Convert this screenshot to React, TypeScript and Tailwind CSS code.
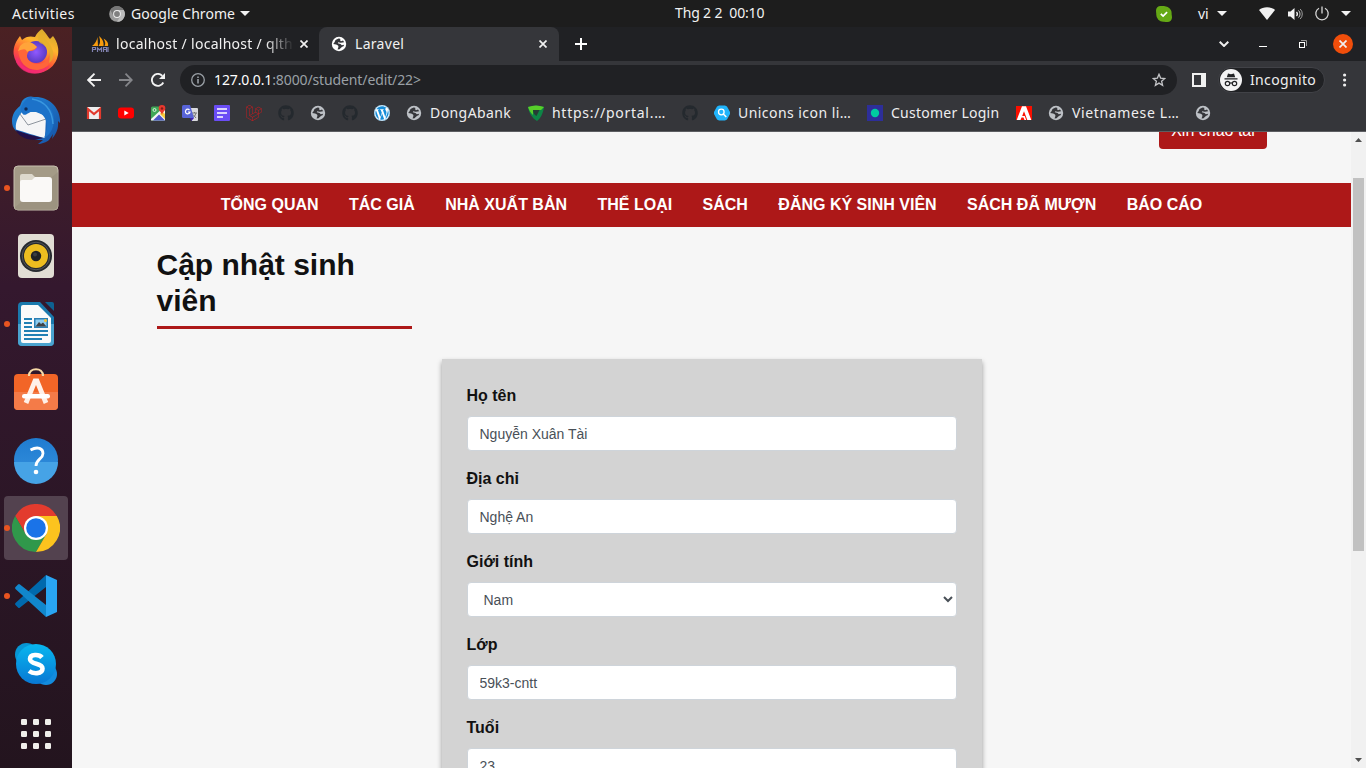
import React from "react";
import { FaGithub, FaLaravel, FaWordpress } from "react-icons/fa";

type IconProps = { className?: string };

const ui = "font-['Noto_Sans','Open_Sans',sans-serif]";

function Globe({ className = "" }: IconProps) {
  return (
    <svg viewBox="0 0 16 16" className={"size-4 shrink-0 " + className}>
      <circle cx="8" cy="8" r="7.2" fill="currentColor" />
      <path d="M7.600 2.600C6.200 3.300 4.600 3.500 4 5C3.900 6.300 3 6.800 2.200 8L5.200 8.600L7 9.500C8 10.600 7 11.600 6.600 13.600L8.600 13.200C10 12 10.500 11 12.500 10.300L13.200 8.800L10.800 9.200L9.500 8L6.800 7.300L7.200 6.200L9.500 6.800C11 7 12 6.200 13.200 6.300L12 4.400L10 5.200C8.800 5 9.500 3.800 9.200 2.800Z" fill="#35363a" />
    </svg>
  );
}

function Caret({ className = "" }: IconProps) {
  return (
    <svg viewBox="0 0 10 5" className={"h-[5px] w-[10px] " + className}>
      <path d="M0 0H10L5 5Z" fill="#f2f2f2" />
    </svg>
  );
}

function Cross({ className = "" }: IconProps) {
  return (
    <svg viewBox="0 0 8 8" className={"size-2 " + className}>
      <path d="M.5.5 7.5 7.5M7.5.5.5 7.5" stroke="#f1f1f1" strokeWidth="1.7" fill="none" />
    </svg>
  );
}

function TopBar() {
  return (
    <header className={ui + " flex h-[27px] shrink-0 items-center bg-[#1d1d1d] text-[14px] leading-[25px] text-[#f2f2f2]"}>
      <span className="ml-3 w-[97px] pb-px tracking-[0.45px]">Activities</span>
      <svg viewBox="0 0 16 16" className="size-4 shrink-0">
        <circle cx="8" cy="8" r="7.8" fill="#9b9b9b" />
        <path d="M8 4H14.8A7.8 7.8 0 0 0 1.3 4L4.6 10Z" fill="#777" />
        <path d="M8 4H14.8A7.8 7.8 0 0 1 8 15.8L11.5 10Z" fill="#bbb" />
        <circle cx="8" cy="8" r="3.9" fill="#eee" />
        <circle cx="8" cy="8" r="2.9" fill="#808080" />
      </svg>
      <span className="ml-[6px] w-[109px] pb-px tracking-[0.05px] whitespace-nowrap">Google Chrome</span>
      <Caret />
      <span className="ml-[425px] w-[481px] pb-[2px] tracking-[-0.15px] whitespace-pre">Thg 2 2  00:10</span>
      <svg viewBox="0 0 16 16" className="size-4 shrink-0">
        <path d="M4.500 0C7 0 7-.1 9 .2A7 7 0 0 1 15.600 8C15.700 9 16 10 16 11.500A4.500 4.500 0 0 1 11.500 16C10 16 9 15.800 8 15.700A7 7 0 0 1 .3 8C.2 7 0 6 0 4.500A4.500 4.500 0 0 1 4.500 0Z" fill="#65a915" />
        <path d="m4.800 7.800 2.300 2.200 4-3.900" stroke="#fff" strokeWidth="1.7" fill="none" />
      </svg>
      <span className="ml-[26px] w-[19px] pb-px">vi</span>
      <Caret />
      <svg viewBox="0 0 16 13" className="ml-[32px] h-[13px] w-4 shrink-0">
        <path d="M0 3C4-.7 12-.7 16 3L8 13Z" fill="#f2f2f2" />
      </svg>
      <svg viewBox="0 0 16 16" className="ml-3 size-4 shrink-0" fill="none" stroke="#f2f2f2">
        <path d="M1 5.500H3.500L7.500 2V14L3.500 10.500H1Z" fill="#f2f2f2" stroke="none" />
        <path d="M9.500 6A3 3 0 0 1 9.500 10" strokeWidth="1.3" />
        <path d="M11.500 4.400A5 5 0 0 1 11.500 11.600" opacity=".8" />
        <path d="M13.200 3A7 7 0 0 1 13.200 13" opacity=".6" />
      </svg>
      <svg viewBox="0 0 16 16" className="ml-[11px] size-4 shrink-0" fill="none" stroke="#d8d8d8" strokeWidth="1.3">
        <path d="M5 2.200A6.200 6.200 0 1 0 11 2.200M8 .5V7.500" />
      </svg>
      <Caret className="ml-[11px]" />
    </header>
  );
}

function Firefox() {
  return (
    <svg viewBox="0 0 48 48" className="size-12">
      <defs>
        <linearGradient id="ff1" x1=".8" y1="0" x2=".3" y2="1"><stop stopColor="#cda72c" /><stop offset=".35" stopColor="#ffb52e" /><stop offset=".65" stopColor="#ff5a35" /><stop offset="1" stopColor="#e5157c" /></linearGradient>
        <radialGradient id="ff2"><stop stopColor="#9059ff" /><stop offset="1" stopColor="#5b3bc4" /></radialGradient>
      </defs>
      <path d="M30 1C34 5 36 9 38 11L41 8C46 15 47 21 46 27A22.5 22.5 0 0 1 1.600 26C1 19 4 13 8 8L10 12C14 8 19 8 23 9C25 5 27 3 30 1Z" fill="url(#ff1)" />
      <path d="M5 29C9 42 25 47 38 37C31 50 10 48 4 34Z" fill="#f72d73" opacity=".7" />
      <circle cx="24" cy="24" r="11" fill="url(#ff2)" />
      <path d="M6 22C11 21 10 16 15 14L25 19C23 23 20 23 17 23C12 29 17 35 25 36C33 36 38 31 37 23C42 34 35 41 25 42C13 42 7 33 6 22Z" fill="#ff663a" />
      <path d="M8 18C13 13 19 12 25 19C21 23 17 22 15 24C14 20 11 21 6 23Z" fill="#ffa43a" />
      <path d="M29 5C32 12 38 13 41 23C42 30 40 33 37 35C39 26 36 18 28 15C25 12 26 8 29 5Z" fill="#e4af2c" opacity=".8" />
    </svg>
  );
}

function Thunderbird() {
  return (
    <svg viewBox="0 0 48 48" className="size-12">
      <defs><linearGradient id="tb" x1="0" y1="0" x2="1" y2="1"><stop stopColor="#248bdc" /><stop offset="1" stopColor="#1552a6" /></linearGradient></defs>
      <path d="M10 5C14 0 19 0 22 1C37 0 49 12 48 27L46 25C47 34 43 39 40 43L41 38L37 44C35 46 29 48 26 48L31 44L25 44L4 35C1 32 0 29 0 25C0 18 4 13 8 10Z" fill="url(#tb)" />
      <path d="M10 16 24 16 34 20 33 42C24 40 12 36 4 33.500C3 28 5 22 10 16Z" fill="#f5f5f6" />
      <path d="M8 18 16 29 34 23" fill="none" stroke="#8d949d" />
      <path d="M3.500 34C12 37 22 40 31 42C29 43 27 42.500 25 43.500C14 45 7 40 3.500 34Z" fill="#21104a" />
      <path d="M10 17C6 13 11 6 17 1C27 0 42 10 42 23C42 33 37 40 32 42C38 28 34 17 22 15C17 15 13 22 10 17Z" fill="#1c72c9" />
      <path d="M20 3C32 5 40 13 41 28" fill="none" stroke="#46a7e8" strokeWidth="1.500" opacity=".7" />
      <circle cx="14" cy="13" r="1.700" fill="#102a55" />
    </svg>
  );
}

function Files() {
  return (
    <svg viewBox="0 0 48 48" className="size-12">
      <rect x="2" y="2" width="44" height="44" rx="4" fill="#a49b87" stroke="#c6bfae" />
      <path d="M2 44 46 8V42Q46 46 42 46H4Z" fill="#978e7b" opacity=".6" />
      <path d="M8 12Q8 10 10 10H20L23 13H36V20H8Z" fill="#ddd9cd" />
      <path d="M8 18Q8 16 10 16H20L23 13H37Q40 13 40 16V35Q40 38 37 38H11Q8 38 8 35Z" fill="#faf9f7" />
    </svg>
  );
}

function Rhythmbox() {
  return (
    <svg viewBox="0 0 48 48" className="size-12">
      <rect x="6" y="2" width="36" height="44" rx="4" fill="#e1ddd4" />
      <circle cx="24" cy="24" r="16" fill="#26292e" />
      <circle cx="24" cy="24" r="13.800" fill="none" stroke="#55585c" />
      <circle cx="24" cy="24" r="12" fill="#edbd20" />
      <circle cx="24" cy="24" r="5.200" fill="#202225" />
      <circle cx="23" cy="22.500" r="2" fill="#3b3e42" />
    </svg>
  );
}

function Writer() {
  return (
    <svg viewBox="0 0 48 48" className="size-12">
      <path d="M10 2H28L42 17V42Q42 46 38 46H10Q6 46 6 42V6Q6 2 10 2Z" fill="#1a79ad" />
      <path d="M6 24H42V42Q42 46 38 46H10Q6 46 6 42Z" fill="#4aa3cf" />
      <path d="M33 2H40Q42 2 42 4V11Z" fill="#0e6191" />
      <path d="M11 5H26L39 18V41Q39 43 37 43H11Q9 43 9 41V7Q9 5 11 5Z" fill="#fafafa" />
      <path d="M12 19H20M12 23H20M12 27H20M12 31H36M12 35H36M12 39H30" stroke="#2180b4" strokeWidth="1.800" />
      <rect x="22" y="18" width="14" height="10" fill="#2a7fb4" />
      <rect x="23.500" y="19.500" width="11" height="7" fill="#8dccef" />
      <path d="M23.500 26.500 27 22 29 24 31 22.500 34.500 26.500Z" fill="#3e4245" /><circle cx="33.500" cy="20.500" r="1.500" fill="#f5c12e" />
    </svg>
  );
}

function Software() {
  return (
    <svg viewBox="0 0 48 48" className="size-12">
      <rect x="2" y="6" width="44" height="36" rx="4" fill="#f26527" />
      <path d="M2 24H46V38Q46 42 42 42H6Q2 42 2 38Z" fill="#f47b48" />
      <path d="M17 8C17-1 31-1 31 8" fill="none" stroke="#f6d9a6" strokeWidth="2.200" />
      <path d="M14 35 23 13H25L34 35" fill="none" stroke="#fff0e8" strokeWidth="4.800" />
      <rect x="10" y="26" width="28" height="4.500" rx="2.200" fill="#fff" />
    </svg>
  );
}

function Help() {
  return (
    <svg viewBox="0 0 48 48" className="size-12">
      <defs><linearGradient id="hp" x1="0" y1="0" x2="0" y2="1"><stop stopColor="#1f7bd0" /><stop offset="1" stopColor="#3592de" /></linearGradient></defs>
      <circle cx="24" cy="24" r="22" fill="url(#hp)" />
      <path d="M2 26A22 22 0 0 0 46 26Z" fill="#46a3e6" />
      <path d="M18.500 14C26 10 31 12.500 31 17.500C31 23 24 23 24 30" fill="none" stroke="#fff" strokeWidth="2.800" />
      <circle cx="24" cy="36" r="2.300" fill="#fff" />
    </svg>
  );
}

function Chrome() {
  return (
    <svg viewBox="0 0 48 48" className="size-12">
      <path d="M24 12H44.800A24 24 0 0 0 3.200 12L13.600 30Z" fill="#e33b2e" />
      <path d="M13.600 30 3.200 12A24 24 0 0 0 24 48L34.400 30Z" fill="#30984b" />
      <path d="M34.400 30 24 48A24 24 0 0 0 44.800 12H24Z" fill="#fcc31e" />
      <circle cx="24" cy="24" r="12" fill="#fff" /><circle cx="24" cy="24" r="9.800" fill="#1a73e8" />
    </svg>
  );
}

function Code() {
  return (
    <svg viewBox="0 0 48 48" className="size-12">
      <path d="M34 3V15L8 35.500Q7 36.500 6 35.500L3.500 33Q2.500 32 3.500 31Z" fill="#0069ad" />
      <path d="M34 45V33L8 12.500Q7 11.500 6 12.500L3.500 15Q2.500 16 3.500 17Z" fill="#1187cc" />
      <path d="M34 3 45 8V40L34 45Z" fill="#29a5f2" />
    </svg>
  );
}

function Skype() {
  return (
    <svg viewBox="0 0 48 48" className="size-12">
      <defs><linearGradient id="sk" x1="0" y1="0" x2="0" y2="1"><stop stopColor="#08b7ef" /><stop offset="1" stopColor="#0878d4" /></linearGradient></defs>
      <circle cx="14.500" cy="14.500" r="11.500" fill="#0796d4" /><circle cx="34" cy="34" r="11" fill="#138bdd" />
      <circle cx="24" cy="24" r="20" fill="url(#sk)" />
      <path d="M30 17.500C27 14 18 14 18 19C18 25 30.500 22.500 30.500 28.500C30.500 34.500 21 34 17 31" fill="none" stroke="#fff" strokeWidth="4.600" />
    </svg>
  );
}

function AppGrid() {
  return (
    <svg viewBox="0 0 30 30" className="mt-1 size-[30px]" fill="#f0efeb">
      {[0, 12, 24].map((y) => [0, 12, 24].map((x) => <rect key={x + "-" + y} x={x} y={y} width="6" height="6" rx="1.2" />))}
    </svg>
  );
}

const apps = [
  { Icon: Firefox }, { Icon: Thunderbird }, { Icon: Files, running: true }, { Icon: Rhythmbox },
  { Icon: Writer, running: true }, { Icon: Software }, { Icon: Help },
  { Icon: Chrome, running: true, active: true }, { Icon: Code, running: true }, { Icon: Skype }, { Icon: AppGrid },
];

function Dock() {
  return (
    <aside className="w-[72px] shrink-0 overflow-hidden bg-linear-to-b from-[#4b2123] via-[#34182e] via-35% to-[#23141e]">
      <div className="-mt-[9px] flex flex-col">
        {apps.map(({ Icon, running, active }, i) => (
          <div key={i} className="flex h-[68px] shrink-0 items-center justify-center">
            <div className={"relative flex size-16 items-center justify-center rounded " + (active ? "bg-[#53424f]" : "")}>
              {running && <i className="absolute top-[29px] left-0 size-[6px] rounded-full bg-[#e95420]" />}
              <Icon />
            </div>
          </div>
        ))}
      </div>
    </aside>
  );
}

function TabStrip() {
  return (
    <div className="flex h-[34px] items-center bg-[#202124] text-[14px] leading-5 text-[#f1f1f1]">
      <svg viewBox="0 0 18 16" className="ml-[19px] h-4 w-[18px] shrink-0">
        <path d="M1 10C4 8 6 4 6.500 1L7 10ZM7.500 10C10 7 9 3 8 0C12 3 13 7 12.500 10ZM13.500 10C15 8 14 5 12.500 2.500C17 5 17.500 8 17 10Z" fill="#f89c0e" />
        <path d="M1.500 16V11.500H4.500V13.500H2M6.500 16V12L8.500 14 10.500 12V16M12.500 16V11.500H15.500V16M12.500 13.500H15.500M17 11V16" fill="none" stroke="#8182b1" strokeWidth="1.200" />
      </svg>
      <span className="ml-[7px] w-[178px] overflow-hidden tracking-[0.28px] whitespace-nowrap [mask-image:linear-gradient(90deg,#000_84%,transparent)]">localhost / localhost / qlth</span>
      <Cross className="ml-[6px]" />
      <div className="ml-[11px] flex h-full w-[240px] items-center rounded-t-lg bg-[#35363a] pl-3">
        <Globe className="text-white" />
        <span className="ml-2 w-[184px] tracking-[0.3px]">Laravel</span>
        <Cross />
      </div>
      <svg viewBox="0 0 12 12" className="ml-4 size-3"><path d="M6 0V12M0 6H12" stroke="#fff" strokeWidth="2" /></svg>
      <svg viewBox="0 0 10 6" className="ml-[632px] h-[6px] w-[10px]"><path d="m.7.7 4.300 4.300L9.300.7" fill="none" stroke="#eee" strokeWidth="2" /></svg>
      <i className="mt-[5px] ml-[30px] h-px w-2 bg-white" />
      <svg viewBox="0 0 8 8" className="ml-8 size-2" fill="none"><path d="M2 .5H7.500V6" stroke="#999" /><rect x=".5" y="2.500" width="5" height="5" stroke="#fff" /></svg>
      <span className="ml-[26px] flex size-5 items-center justify-center rounded-full bg-[#f04e0b]"><Cross /></span>
    </div>
  );
}

function Toolbar() {
  return (
    <div className="flex h-[37px] items-center bg-[#35363a] text-[14px]">
      <svg viewBox="0 0 14 14" className="ml-[15px] size-[14px]" fill="none" stroke="#f1f1f1" strokeWidth="1.900"><path d="M14 7H1.500M7.500.7 1.200 7l6.300 6.300" /></svg>
      <svg viewBox="0 0 14 14" className="ml-[18px] size-[14px]" fill="none" stroke="#85868a" strokeWidth="1.800"><path d="M0 7H12.500M6.500.7 12.800 7l-6.300 6.300" /></svg>
      <svg viewBox="0 0 14 14" className="ml-[18px] size-[14px]" fill="none" stroke="#f1f1f1" strokeWidth="1.900"><path d="M12.300 9.500A6 6 0 1 1 11.300 2.800" /><path d="M14 0V6H8Z" fill="#f1f1f1" stroke="none" /></svg>
      <div className="ml-[15px] flex h-[30px] w-[997px] items-center rounded-full bg-[#202124]">
        <svg viewBox="0 0 14 14" className="ml-[11px] size-[14px]" fill="none" stroke="#9aa0a6"><circle cx="7" cy="7" r="6.300" strokeWidth="1.300" /><path d="M7 6V10.500M7 3.500V5" strokeWidth="1.600" /></svg>
        <span className="ml-[9px] flex-1 tracking-[-0.12px] text-[#9aa0a6]"><span className="text-white">127.0.0.1</span>:8000/student/edit/22&gt;</span>
        <svg viewBox="0 0 14 14" className="mr-[11px] size-[14px]" fill="none" stroke="#c4c5c8" strokeWidth="1.300"><path d="m7 1.300 1.600 3.800 4.200.4-3.200 2.700 1 4.100L7 10.100l-3.600 2.200 1-4.100L1.200 5.500l4.200-.4Z" /></svg>
      </div>
      <svg viewBox="0 0 14 14" className="ml-[15px] size-[14px]"><path d="M0 0H14V14H0ZM2 2V12H9V2Z" fill="#f1f1f1" fillRule="evenodd" /></svg>
      <div className="ml-3 flex h-[26px] w-[107px] items-center rounded-full border border-[#414247] bg-[#202124] pl-px text-[#eee]">
        <svg viewBox="0 0 22 22" className="size-[22px] shrink-0">
          <circle cx="11" cy="11" r="11" fill="#f3f3f4" />
          <path d="M8 4.500 11 5.200 14 4.500 15.200 8.300H6.800ZM4.500 9.300H17.500V10.400H4.500Z" fill="#222326" />
          <g fill="none" stroke="#222326" strokeWidth="1.200"><circle cx="7.500" cy="14.500" r="2.200" /><circle cx="14.500" cy="14.500" r="2.200" /><path d="M9.700 14.300Q11 13.500 12.300 14.300" /></g>
        </svg>
        <span className="ml-2 tracking-[0.35px]">Incognito</span>
      </div>
      <svg viewBox="0 0 4 14" className="ml-[18px] h-[14px] w-1" fill="#eee"><circle cx="1.600" cy="2" r="1.600" /><circle cx="1.600" cy="7" r="1.600" /><circle cx="1.600" cy="12" r="1.600" /></svg>
    </div>
  );
}

const box = "size-4 shrink-0";

const Gmail = () => <svg viewBox="0 0 16 16" className={box}><path d="M1 2H15V14H1Z" fill="#eee" /><path d="M2 14V4L8 9 14 4V14" fill="none" stroke="#e13a2d" strokeWidth="2.200" /></svg>;
const YouTube = () => <svg viewBox="0 0 16 16" className={box}><rect y="2.500" width="16" height="11" rx="3" fill="#f00" /><path d="M6.300 5.500 10.700 8l-4.400 2.500Z" fill="#fff" /></svg>;
const Maps = () => <svg viewBox="0 0 16 16" className={box}><rect x="1" y="1.500" width="14" height="14" rx="1.500" fill="#3fa757" /><path d="M1 14 13 3 15 5V15.500H1Z" fill="#f4f4f4" /><path d="M3 15.500 9 9.500 15 15.500Z" fill="#4c55c9" /><path d="M10 9 15 14V9L12 6Z" fill="#f6cb3c" /><circle cx="4.500" cy="5" r="1.500" fill="none" stroke="#d9f0dd" /><path d="M12 0A3.300 3.300 0 0 1 15.300 3.500C15.300 6 12.500 7 12 10C11.500 7 8.700 6 8.700 3.500A3.300 3.300 0 0 1 12 0Z" fill="#e8382d" /><circle cx="12" cy="3.500" r="1.200" fill="#831d18" /></svg>;
const Translate = () => <svg viewBox="0 0 16 16" className={box}><path d="M7 3H15Q16 3 16 4V15Q16 16 15 16H10Z" fill="#d8d9dd" /><path d="M10 8H15M12.500 7V8M14 8Q13 12 10.500 13M11 9.500 14 13" stroke="#777" fill="none" /><path d="M1.500 0H8L12 13H1.500Q0 13 0 11.500V1.500Q0 0 1.500 0Z" fill="#5864d8" /><path d="M7.500 5A2.300 2.300 0 1 0 8 7H6" stroke="#fff" strokeWidth="1.200" fill="none" /><path d="M8 13H12L9.500 16Z" fill="#4020b4" /></svg>;
const Forms = () => <svg viewBox="0 0 16 16" className={box}><rect width="16" height="16" rx="1" fill="#6a4df5" /><path d="M3 4H13M3 8H13M3 12H9" stroke="#fff" strokeWidth="1.700" /></svg>;
const Shield = () => <svg viewBox="0 0 16 16" className={box}><path d="M0 2Q8-1 16 2C15 9 12 14 9 16C4 13 1 8 0 2Z" fill="#0d8546" /><path d="M0 2Q8-1 16 2L13 5H5L5 10C2 7 1 5 0 2Z" fill="#58ce2a" /><path d="M5 5H11.500L8.500 11Q5 9 5 5Z" fill="#263c34" /></svg>;
const Unicons = () => <svg viewBox="0 0 16 16" className={box}><path d="M5 .5H11L13 1.500 16 7V9L13 14.500 11 15.500H5L3 14.500 0 9V7L3 1.500Z" fill="#20b4fb" /><circle cx="7.300" cy="7" r="2.800" fill="none" stroke="#fff" strokeWidth="1.300" /><path d="m9.300 9 3 3" stroke="#fff" strokeWidth="1.500" /></svg>;
const Login = () => <svg viewBox="0 0 16 16" className={box}><path d="M0 0H16V16H0Z" fill="#2d2e99" /><circle cx="8" cy="8" r="4.200" fill="#00caa0" /></svg>;
const Adobe = () => <svg viewBox="0 0 16 16" className={box}><path d="M0 1H16V15H0Z" fill="#fa0f00" /><path d="M6 1.200H10L15.300 15H11.300L8 6.300 6.200 11H8.700L10.200 15H.7Z" fill="#fff" /><path d="M5.500 12.500H7.500L8.500 15H4.500Z" fill="#fa0f00" /></svg>;

type Bookmark = { icon: React.ReactNode; label?: string; cls?: string };
const gray = "text-[#bdc1c6]";
const bookmarks: Bookmark[] = [
  { icon: <Gmail /> }, { icon: <YouTube /> }, { icon: <Maps /> }, { icon: <Translate /> }, { icon: <Forms /> },
  { icon: <FaLaravel className="size-4 text-[#c41d20]" /> },
  { icon: <FaGithub className="size-4 text-[#24292e]" /> },
  { icon: <Globe className={gray} /> },
  { icon: <FaGithub className="size-4 text-[#24292e]" /> },
  { icon: <span className="flex size-4 items-center justify-center rounded-full bg-white"><FaWordpress className="size-4 text-[#168dd8]" /></span> },
  { icon: <Globe className={gray} />, label: "DongAbank", cls: "w-[82px] tracking-[0.42px]" },
  { icon: <Shield />, label: "https://portal.…", cls: "w-[114px] tracking-[0.72px]" },
  { icon: <FaGithub className="size-4 text-[#24292e]" /> },
  { icon: <Unicons />, label: "Unicons icon li…", cls: "w-[113px] tracking-[0.45px]" },
  { icon: <Login />, label: "Customer Login", cls: "w-[109px] tracking-[0.25px]" },
  { icon: <Adobe /> },
  { icon: <Globe className={gray} />, label: "Vietnamese L…", cls: "w-[107px] tracking-[0.64px]" },
  { icon: <Globe className={gray} /> },
];

function BookmarksBar() {
  return (
    <div className="flex h-[34px] items-center gap-4 border-b border-[#5d5e62] bg-[#35363a] pb-[3px] pl-[14px] text-[14px] leading-5 text-[#eeeeef]">
      {bookmarks.map((b, i) => (
        <div key={i} className="flex h-5 shrink-0 items-center gap-2">
          {b.icon}
          {b.label && <span className={"whitespace-nowrap " + b.cls}>{b.label}</span>}
        </div>
      ))}
    </div>
  );
}

const menu = ["TỔNG QUAN", "TÁC GIẢ", "NHÀ XUẤT BẢN", "THỂ LOẠI", "SÁCH", "ĐĂNG KÝ SINH VIÊN", "SÁCH ĐÃ MƯỢN", "BÁO CÁO"];
const field = "block h-[35px] w-full rounded border border-[#ced4da] bg-white px-3 py-[6px] text-[14px] leading-[21px] text-[#495057]";

function Field({ label, children }: { label: string; children: React.ReactNode }) {
  return (
    <label className="mb-4 block">
      <span className="mb-2 block text-[16px] leading-6 font-bold text-[#111]">{label}</span>
      {children}
    </label>
  );
}

function Page() {
  return (
    <main className="min-w-0 flex-1 overflow-hidden bg-[#f6f6f6] font-['Liberation_Sans',sans-serif]">
      <div className="-mt-[21px] flex h-[72px] items-start justify-end pr-[84px]">
        <button className="h-[38px] w-[108px] rounded bg-[#ad1818] pt-px text-[16px] text-white">Xin chào tài</button>
      </div>
      <nav className="flex h-11 justify-center gap-[30.450px] bg-[#ad1818] text-[16px] leading-[43px] font-bold whitespace-nowrap text-white">
        {menu.map((m) => <a key={m}>{m}</a>)}
      </nav>
      <div className="mx-auto w-[1110px] pt-5">
        <h1 className="w-[255px] border-b-[3px] border-[#ad1818] pb-[7px] text-[30px] leading-9 font-bold text-[#111]">Cập nhật sinh viên</h1>
      </div>
      <form className="mx-auto mt-[30px] w-[540px] bg-[#d3d3d3] p-[25px] shadow-[0_3px_5px_rgba(0,0,0,0.4)]">
        <Field label="Họ tên"><input className={field} defaultValue="Nguyễn Xuân Tài" /></Field>
        <Field label="Địa chỉ"><input className={field} defaultValue="Nghệ An" /></Field>
        <Field label="Giới tính"><select className={field}><option>Nam</option></select></Field>
        <Field label="Lớp"><input className={field} defaultValue="59k3-cntt" /></Field>
        <Field label="Tuổi"><input className={field} defaultValue="23" /></Field>
      </form>
    </main>
  );
}

function Scrollbar() {
  return (
    <div className="flex w-[15px] shrink-0 flex-col items-center bg-[#f1f1f1]">
      <svg viewBox="0 0 7 4" className="mt-[6px] h-1 w-[7px]"><path d="M3.500 0 7 4H0Z" fill="#505050" /></svg>
      <div className="mt-9 h-[373px] w-[11px] bg-[#c1c1c1]" />
      <svg viewBox="0 0 7 4" className="mt-auto mb-[6px] h-1 w-[7px]"><path d="M0 0H7L3.500 4Z" fill="#505050" /></svg>
    </div>
  );
}

export default function App() {
  return (
    <div className="flex h-[768px] w-[1366px] flex-col overflow-hidden bg-[#1d1d1d]">
      <TopBar />
      <div className="flex min-h-0 flex-1">
        <Dock />
        <section className="flex min-w-0 flex-1 flex-col">
          <div className={ui + " shrink-0"}>
            <TabStrip />
            <Toolbar />
            <BookmarksBar />
          </div>
          <div className="flex min-h-0 flex-1">
            <Page />
            <Scrollbar />
          </div>
        </section>
      </div>
    </div>
  );
}
